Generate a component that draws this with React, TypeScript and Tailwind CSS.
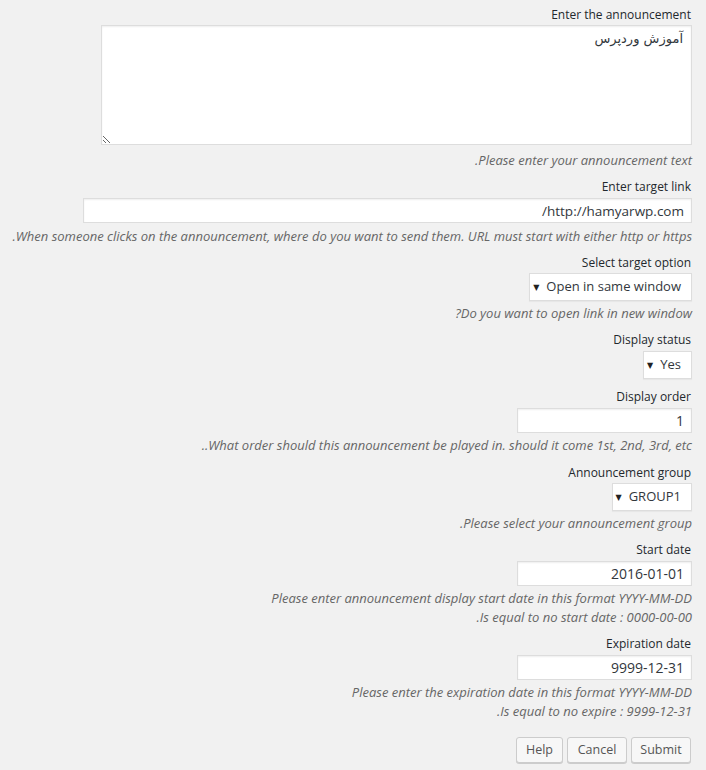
const font = { fontFamily: '"Open Sans", "DejaVu Sans", sans-serif' };

function Label({ children, top }: { children: React.ReactNode; top: string }) {
  return <div className={`${top} text-[12px] leading-[18px] text-[#23282d] pr-[1px]`}>{children}</div>;
}

function Desc({ children, top = "mt-[3px]" }: { children: React.ReactNode; top?: string }) {
  return <p className={`${top} text-[13px] leading-[19px] italic text-[#666]`}>{children}</p>;
}

function FakeSelect({ value, width, top = "mt-[1px]" }: { value: string; width: string; top?: string }) {
  return (
    <div
      className={`${top} ${width} h-[28px] flex items-center gap-[7px] pr-[10px] pl-[7px] whitespace-nowrap bg-white border border-[#ddd] shadow-[0_1px_1px_rgba(0,0,0,0.04)] text-[13px] text-[#32373c]`}
    >
      <span>{value}</span>
      <span className="text-[8px] text-[#222]">▼</span>
    </div>
  );
}

function TextInput({ value, width, size = "text-[14px]" }: { value: string; width: string; size?: string }) {
  return (
    <input
      readOnly
      dir="rtl"
      defaultValue={value}
      className={`mt-[2px] ${width} h-[25px] px-[7px] bg-white border border-[#ddd] shadow-[inset_0_1px_2px_rgba(0,0,0,0.07)] ${size} text-[#32373c] outline-none`}
      style={font}
    />
  );
}

export default function App() {
  return (
    <div dir="rtl" className="min-h-screen bg-[#f1f1f1] pr-[14px] pt-[6px]" style={font}>
      <div className="flex flex-col items-start">
        <Label top="mt-0">Enter the announcement</Label>
        <textarea
          readOnly
          dir="rtl"
          defaultValue="آموزش وردپرس"
          className="mt-[1px] w-[591px] h-[120px] px-[8px] pt-[3px] bg-white border border-[#ddd] shadow-[inset_0_1px_2px_rgba(0,0,0,0.07)] text-[13px] leading-[20px] text-[#32373c] outline-none"
          style={{ fontFamily: 'Tahoma, "DejaVu Sans", sans-serif' }}
        />
        <Desc top="mt-[6px]">Please enter your announcement text.</Desc>

        <Label top="mt-[8px]">Enter target link</Label>
        <TextInput value="http://hamyarwp.com/" width="w-[609px]" size="text-[13.5px]" />
        <Desc top="mt-[4px]">When someone clicks on the announcement, where do you want to send them. URL must start with either http or https.</Desc>

        <Label top="mt-[8px]">Select target option</Label>
        <FakeSelect value="Open in same window" width="w-[163px]" />
        <Desc>Do you want to open link in new window?</Desc>

        <Label top="mt-[8px]">Display status</Label>
        <FakeSelect value="Yes" width="w-[49px]" top="mt-[2px]" />

        <Label top="mt-[9px]">Display order</Label>
        <TextInput value="1" width="w-[175px]" />
        <Desc>What order should this announcement be played in. should it come 1st, 2nd, 3rd, etc..</Desc>

        <Label top="mt-[9px]">Announcement group</Label>
        <FakeSelect value="GROUP1" width="w-[80px]" />
        <Desc>Please select your announcement group.</Desc>

        <Label top="mt-[8px]">Start date</Label>
        <TextInput value="2016-01-01" width="w-[175px]" />
        <Desc>
          Please enter announcement display start date in this format YYYY-MM-DD
          <br />
          0000-00-00 : Is equal to no start date.
        </Desc>

        <Label top="mt-[8px]">Expiration date</Label>
        <TextInput value="9999-12-31" width="w-[175px]" />
        <Desc>
          Please enter the expiration date in this format YYYY-MM-DD
          <br />
          9999-12-31 : Is equal to no expire.
        </Desc>

        <div className="mt-[16px] flex gap-[4px] pr-[1px]">
          {[
            ["Submit", "w-[60px]"],
            ["Cancel", "w-[60px]"],
            ["Help", "w-[47px]"],
          ].map(([b, w]) => (
            <button
              key={b}
              className={`${w} h-[26px] bg-[#f7f7f7] border border-[#ccc] rounded-[3px] shadow-[0_1px_0_#ccc] text-[12.5px] text-[#555]`}
              style={font}
            >
              {b}
            </button>
          ))}
        </div>
      </div>
    </div>
  );
}
